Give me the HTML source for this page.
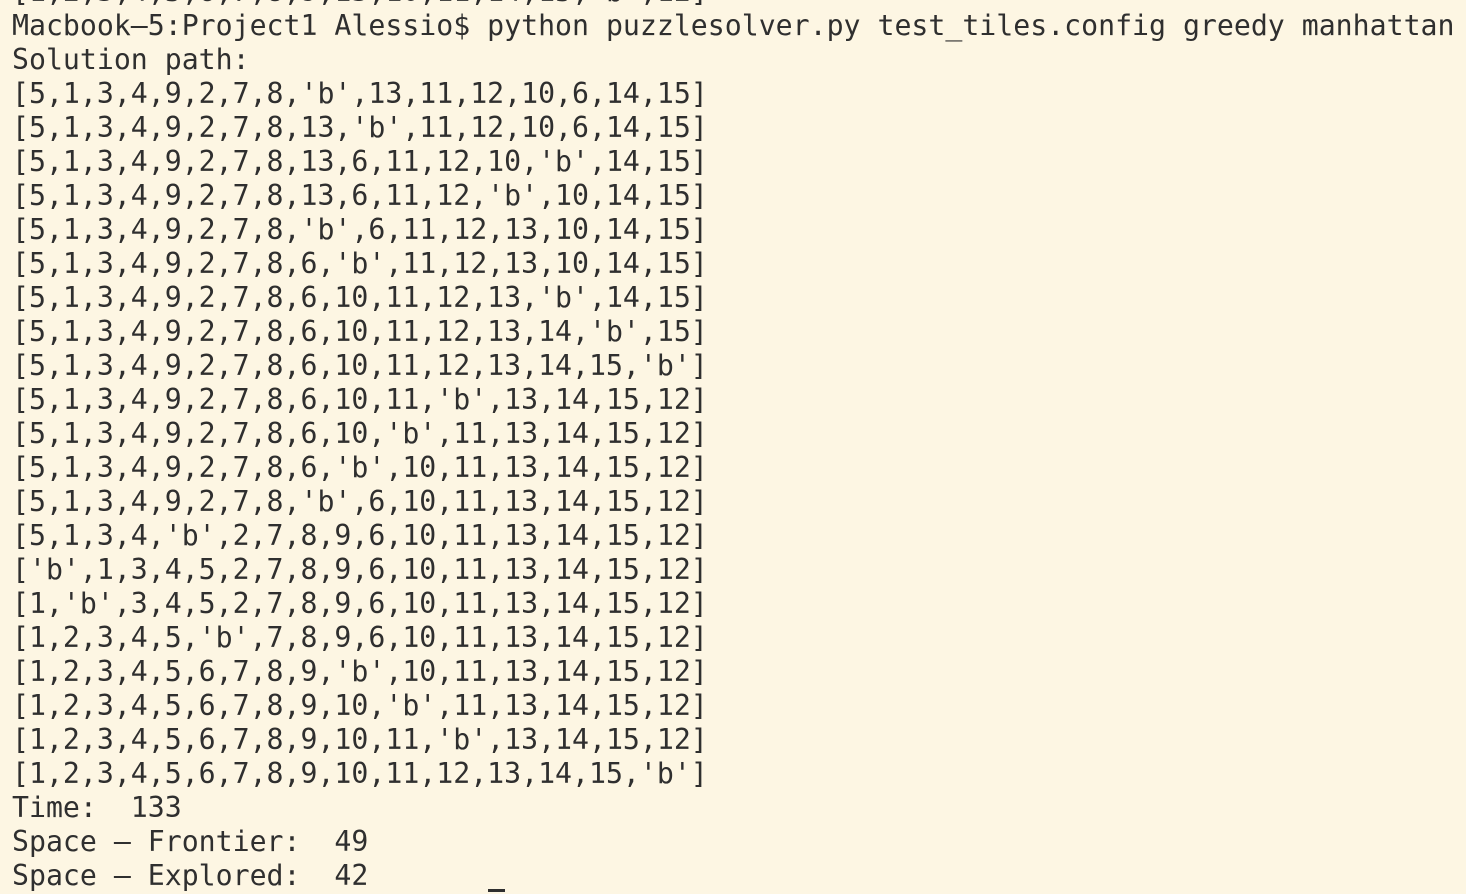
<!DOCTYPE html>
<html><head><meta charset="utf-8"><style>
html,body{margin:0;padding:0;width:1466px;height:894px;overflow:hidden;background:#fdf6e3;}
pre{position:absolute;left:12px;top:-25px;margin:0;font-family:"DejaVu Sans Mono","Liberation Mono",monospace;font-size:28.2px;line-height:34px;color:#2f2f2f;}
.cur{position:absolute;left:488px;top:889px;width:17px;height:3px;background:#2f2f2f;}
</style></head><body>
<pre>[1,2,3,4,5,6,7,8,9,13,10,11,14,15,'b',12]
Macbook–5:Project1 Alessio$ python puzzlesolver.py test_tiles.config greedy manhattan
Solution path:
[5,1,3,4,9,2,7,8,'b',13,11,12,10,6,14,15]
[5,1,3,4,9,2,7,8,13,'b',11,12,10,6,14,15]
[5,1,3,4,9,2,7,8,13,6,11,12,10,'b',14,15]
[5,1,3,4,9,2,7,8,13,6,11,12,'b',10,14,15]
[5,1,3,4,9,2,7,8,'b',6,11,12,13,10,14,15]
[5,1,3,4,9,2,7,8,6,'b',11,12,13,10,14,15]
[5,1,3,4,9,2,7,8,6,10,11,12,13,'b',14,15]
[5,1,3,4,9,2,7,8,6,10,11,12,13,14,'b',15]
[5,1,3,4,9,2,7,8,6,10,11,12,13,14,15,'b']
[5,1,3,4,9,2,7,8,6,10,11,'b',13,14,15,12]
[5,1,3,4,9,2,7,8,6,10,'b',11,13,14,15,12]
[5,1,3,4,9,2,7,8,6,'b',10,11,13,14,15,12]
[5,1,3,4,9,2,7,8,'b',6,10,11,13,14,15,12]
[5,1,3,4,'b',2,7,8,9,6,10,11,13,14,15,12]
['b',1,3,4,5,2,7,8,9,6,10,11,13,14,15,12]
[1,'b',3,4,5,2,7,8,9,6,10,11,13,14,15,12]
[1,2,3,4,5,'b',7,8,9,6,10,11,13,14,15,12]
[1,2,3,4,5,6,7,8,9,'b',10,11,13,14,15,12]
[1,2,3,4,5,6,7,8,9,10,'b',11,13,14,15,12]
[1,2,3,4,5,6,7,8,9,10,11,'b',13,14,15,12]
[1,2,3,4,5,6,7,8,9,10,11,12,13,14,15,'b']
Time:  133
Space – Frontier:  49
Space – Explored:  42</pre>
<div class="cur"></div>
</body></html>
